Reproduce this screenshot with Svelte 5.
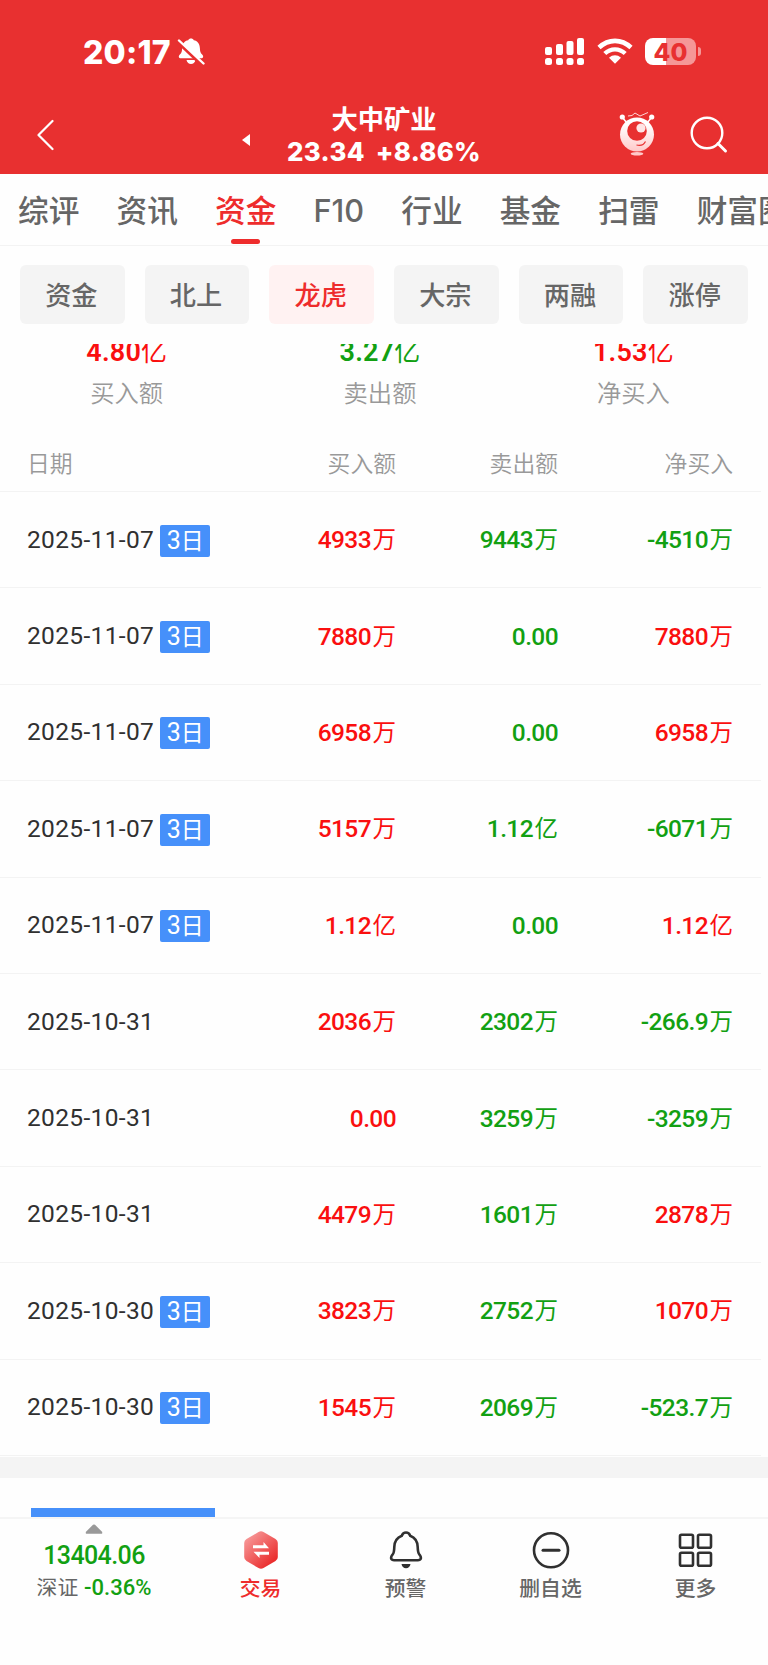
<script>
  const tabs = ['综评', '资讯', '资金', 'F10', '行业', '基金', '扫雷', '财富圈'];
  const filters = ['资金', '北上', '龙虎', '大宗', '两融', '涨停'];
  const activeTab = '资金';
  const activeFilter = '龙虎';

  const summary = [
    { value: '4.80亿', label: '买入额', color: 'up' },
    { value: '3.27亿', label: '卖出额', color: 'down' },
    { value: '1.53亿', label: '净买入', color: 'up' }
  ];

  const rows = [
    { date: '2025-11-07', days: 3, buy: '4933万', sell: '9443万', net: '-4510万' },
    { date: '2025-11-07', days: 3, buy: '7880万', sell: '0.00', net: '7880万' },
    { date: '2025-11-07', days: 3, buy: '6958万', sell: '0.00', net: '6958万' },
    { date: '2025-11-07', days: 3, buy: '5157万', sell: '1.12亿', net: '-6071万' },
    { date: '2025-11-07', days: 3, buy: '1.12亿', sell: '0.00', net: '1.12亿' },
    { date: '2025-10-31', buy: '2036万', sell: '2302万', net: '-266.9万' },
    { date: '2025-10-31', buy: '0.00', sell: '3259万', net: '-3259万' },
    { date: '2025-10-31', buy: '4479万', sell: '1601万', net: '2878万' },
    { date: '2025-10-30', days: 3, buy: '3823万', sell: '2752万', net: '1070万' },
    { date: '2025-10-30', days: 3, buy: '1545万', sell: '2069万', net: '-523.7万' }
  ];

  const number = (value) => value.replace(/[万亿]/, '');
  const unit = (value) => value.replace(/[^万亿]/g, '');
</script>

{#snippet amount(value, color)}
  <span class="amount {color}"><span class="num">{number(value)}</span>{#if unit(value)}<span class="unit">{unit(value)}</span>{/if}</span>
{/snippet}

<div class="page">
  <header>
    <div class="status-bar">
      <span class="time">20:17</span>
      <svg class="mute" width="28" height="28" viewBox="0 0 28 28">
        <path d="M4.2 20.3c-2.9 0-2.9-2.4-1.3-3.8 1.9-1.7 2.1-3.2 2.2-6.2C5.3 5.5 7.7 3 11.2 2.3c.7-2.3 4.9-2.3 5.6 0 3.5.7 5.9 3.2 6.1 8 .1 3 .4 4.5 2.2 6.2 1.6 1.4 1.6 3.8-1.3 3.8z" fill="#fff" />
        <path d="M9.5 22h9c-.6 2.5-2.3 4-4.5 4s-3.9-1.5-4.5-4z" fill="#fff" />
        <path d="M1.5 4.5l23 22" stroke="#e83030" stroke-width="3.5" />
        <path d="M2 2.5l24.5 23" stroke="#fff" stroke-width="2.4" stroke-linecap="round" />
      </svg>
      <span class="spacer"></span>
      <svg width="40" height="28" viewBox="0 0 40 28" fill="#fff">
        <rect x="0" y="9" width="7" height="8" rx="2" />
        <rect x="11" y="6" width="7" height="11" rx="2" />
        <rect x="21.5" y="3" width="7" height="14" rx="2" />
        <rect x="32" y="0" width="7" height="17" rx="2" />
        <rect x="0" y="20" width="7" height="7" rx="2.5" />
        <rect x="11" y="20" width="7" height="7" rx="2.5" />
        <rect x="21.5" y="20" width="7" height="7" rx="2.5" />
        <rect x="32" y="20" width="7" height="7" rx="2.5" />
      </svg>
      <svg class="wifi" width="36" height="26" viewBox="0 0 36 26" fill="none" stroke="#fff">
        <path d="M2 9.5C11.5.6 24.5.6 34 9.5" stroke-width="4.6" />
        <path d="M7.8 15.5c6-5.5 14.4-5.5 20.4 0" stroke-width="4.4" />
        <path d="M12 19.8c3.5-3.3 8.5-3.3 12 0L18 25.8z" fill="#fff" stroke="none" />
      </svg>
      <div class="battery"><span>40</span></div>
      <i class="battery-tip"></i>
    </div>

    <div class="nav">
      <svg class="back" width="18" height="32" viewBox="0 0 18 32">
        <path d="M15.5 2L1.5 16l14 14" fill="none" stroke="#fff" stroke-width="2.2" stroke-linecap="round" stroke-linejoin="round" />
      </svg>
      <svg class="prev" width="8" height="12" viewBox="0 0 8 12"><path d="M8 0v12L0 6z" fill="#fff" /></svg>
      <div class="title">
        <div class="name">大中矿业</div>
        <div class="quote"><span>23.34</span><span>+8.86%</span></div>
      </div>
      <svg class="robot" width="36" height="46" viewBox="0 0 36 46">
        <defs>
          <linearGradient id="robot" x1="0" y1="0" x2="0" y2="1">
            <stop offset="0.2" stop-color="#fff" />
            <stop offset="1" stop-color="#ffc9c9" />
          </linearGradient>
        </defs>
        <path d="M9 5l4-.5 3-2.5 5 3 8-3.5" fill="none" stroke="#ffd5d5" stroke-width="1" />
        <path d="M3.5 6.5l4 5M32.5 6.5l-4 5" stroke="#fff" stroke-width="1.5" />
        <circle cx="3.3" cy="6" r="2.6" fill="#fff" />
        <circle cx="32.7" cy="6" r="2.6" fill="#fff" />
        <circle cx="18" cy="23.5" r="17" fill="url(#robot)" />
        <circle cx="18" cy="20" r="9.8" fill="#e83030" />
        <circle cx="22" cy="17" r="4.6" fill="#ffe5e5" />
        <path d="M17.5 34c4 1 7.5-.5 9-3.5" fill="none" stroke="#e83030" stroke-width="1.2" />
        <ellipse cx="18" cy="42.8" rx="6.3" ry="1.7" fill="#ffc9c9" />
      </svg>
      <svg class="search" width="38" height="38" viewBox="0 0 38 38" fill="none" stroke="#fff" stroke-width="2.4">
        <circle cx="17" cy="17" r="15.3" />
        <path d="M28 27.5l7.5 7.5" stroke-width="3" stroke-linecap="round" />
      </svg>
    </div>
  </header>

  <nav class="tabs">
    {#each tabs as tab}
      <span class="tab" class:active={tab === activeTab}>{tab}</span>
    {/each}
  </nav>

  <div class="filters">
    {#each filters as filter}
      <span class="filter" class:active={filter === activeFilter}>{filter}</span>
    {/each}
  </div>

  <main>
    <div class="summary">
      {#each summary as item}
        <div class="summary-item">
          {@render amount(item.value, item.color)}
          <span class="label">{item.label}</span>
        </div>
      {/each}
    </div>

    <div class="table">
      <div class="row head">
        <span>日期</span>
        <span>买入额</span>
        <span>卖出额</span>
        <span>净买入</span>
      </div>
      {#each rows as row}
        <div class="row">
          <div class="date">
            <span class="num">{row.date}</span>
            {#if row.days}<span class="badge"><span class="num">{row.days}</span>日</span>{/if}
          </div>
          {@render amount(row.buy, 'up')}
          {@render amount(row.sell, 'down')}
          {@render amount(row.net, row.net.startsWith('-') ? 'down' : 'up')}
        </div>
      {/each}
    </div>

    <div class="divider"></div>
    <div class="next-section"><div class="blue-bar"></div></div>
  </main>

  <footer>
    <div class="index">
      <svg width="18" height="10" viewBox="0 0 18 10"><path d="M8 .8q1-.8 2 0l7 7q1 2-1 2H2q-2 0-1-2z" fill="#999" /></svg>
      <span class="index-value num">13404.06</span>
      <span class="index-change">深证 <span class="num">-0.36%</span></span>
    </div>
    <div class="action trade">
      <svg width="40" height="40" viewBox="0 0 40 40">
        <defs>
          <linearGradient id="hex" x1="0.1" y1="0.1" x2="0.8" y2="0.9">
            <stop offset="0" stop-color="#f79a9a" />
            <stop offset="1" stop-color="#ea2a2a" />
          </linearGradient>
        </defs>
        <path d="M17.5 2q2.500-1.400 5 0l12 7q2.300 1.400 2.300 4v14q0 2.600-2.300 4l-12 7q-2.500 1.400-5 0l-12-7q-2.300-1.400-2.300-4V13q0-2.600 2.300-4z" fill="url(#hex)" />
        <path d="M12 15.300h10.500v-3.300l5.500 6.200H12zM28 24.700H18.500v3.300l-6-6.200H28z" fill="#fff" />
      </svg>
      <span>交易</span>
    </div>
    <div class="action">
      <svg width="40" height="40" viewBox="0 0 40 40" fill="none" stroke="#303030" stroke-width="2.6">
        <path d="M20 2.500c-2 0-3.500 1.200-4.200 3.200C11 7.500 8.500 11.500 8.300 17c-.1 3.500-.2 5.700-1.500 7.300-1.600 2-2 3.200-1.600 4.400.4 1.200 1.500 1.600 3 1.600h23.600c1.500 0 2.600-.4 3-1.600.4-1.200 0-2.400-1.600-4.400-1.300-1.600-1.400-3.800-1.500-7.300-.2-5.500-2.700-9.500-7.500-11.300C23.500 3.700 22 2.500 20 2.500z" />
        <path d="M15.500 34h9c-.4 2.600-2 4.200-4.500 4.200s-4.100-1.600-4.500-4.200z" fill="#303030" stroke="none" />
      </svg>
      <span>预警</span>
    </div>
    <div class="action">
      <svg width="40" height="40" viewBox="0 0 40 40" fill="none" stroke="#303030" stroke-width="2.6">
        <circle cx="20" cy="20.3" r="17" />
        <path d="M12 20.300h16" stroke-width="3" stroke-linecap="round" />
      </svg>
      <span>删自选</span>
    </div>
    <div class="action">
      <svg width="40" height="40" viewBox="0 0 40 40" fill="none" stroke="#303030" stroke-width="2.6">
        <rect x="4" y="4.7" width="13" height="13" rx="1.5" />
        <rect x="22" y="4.7" width="13" height="13" rx="1.5" />
        <rect x="4" y="22.7" width="13" height="13" rx="1.5" />
        <rect x="22" y="22.7" width="13" height="13" rx="1.5" />
      </svg>
      <span>更多</span>
    </div>
  </footer>
</div>

<style>
  :global(body) {
    margin: 0;
    background: #fff;
  }

  .page {
    width: 768px;
    height: 1665px;
    overflow: hidden;
    display: flex;
    flex-direction: column;
    background: #fefefe;
    font-family: Inter, 'Noto Sans CJK SC', sans-serif;
    color: #303030;
  }

  svg {
    display: block;
    flex-shrink: 0;
  }

  .num {
    font-family: Roboto, 'Noto Sans CJK SC', sans-serif;
  }

  header {
    height: 174px;
    flex-shrink: 0;
    background: #e83030;
    color: #fff;
  }

  .status-bar {
    height: 66px;
    padding: 38px 67px 0 83px;
    box-sizing: border-box;
    display: flex;
    align-items: flex-start;
  }

  .time {
    width: 88px;
    font-size: 32px;
    line-height: 30px;
    font-weight: 800;
    letter-spacing: 0.2px;
    white-space: nowrap;
  }

  .mute {
    margin-left: 6px;
  }

  .spacer {
    flex: 1;
  }

  .wifi {
    margin: 0 12px;
  }

  .battery {
    width: 51px;
    height: 27px;
    border-radius: 8px;
    background: linear-gradient(90deg, #fff 41%, #f59797 41%);
    color: #e83030;
    font-size: 24.5px;
    line-height: 28px;
    font-weight: 800;
    text-align: center;
  }

  .battery-tip {
    width: 3px;
    height: 9px;
    margin: 9px 0 0 2px;
    border-radius: 0 4px 4px 0;
    background: #f59797;
  }

  .nav {
    height: 109px;
    display: flex;
    align-items: center;
  }

  .back {
    margin: 28px 0 0 37px;
  }

  .prev {
    margin: 39px 0 0 187px;
  }

  .title {
    width: 268px;
    margin-top: 31px;
    text-align: center;
    font-weight: 700;
  }

  .name {
    font-size: 26.3px;
    line-height: 32px;
  }

  .quote {
    display: flex;
    justify-content: center;
    gap: 11px;
    font-size: 25.8px;
    font-weight: 800;
    letter-spacing: 0.3px;
    line-height: 32px;
  }

  .robot {
    margin: 27px 0 0 101px;
  }

  .search {
    margin: 28px 0 0 35px;
  }

  .tabs {
    height: 72px;
    flex-shrink: 0;
    box-sizing: border-box;
    border-bottom: 1px solid #f3f3f3;
    padding-left: 18px;
    display: flex;
    gap: 37.1px;
    overflow: hidden;
  }

  .tab {
    flex-shrink: 0;
    display: flex;
    flex-direction: column;
    align-items: center;
    font-size: 30.7px;
    line-height: 65px;
    font-weight: 500;
    color: #666;
    padding-top: 4px;
    height: 67px;
  }

  .tab.active {
    color: #ee2c2c;
  }

  .tab.active::after {
    content: '';
    width: 29px;
    height: 5px;
    margin-top: -4px;
    border-radius: 3px;
    background: #ee2c2c;
    flex-shrink: 0;
  }

  .filters {
    display: flex;
    gap: 20px;
    padding: 19px 20px 20px;
    flex-shrink: 0;
  }

  .filter {
    flex: 1;
    height: 59px;
    box-sizing: border-box;
    padding-right: 2px;
    border-radius: 6px;
    background: #f4f4f4;
    color: #666;
    font-size: 26.2px;
    line-height: 61px;
    font-weight: 500;
    text-align: center;
  }

  .filter.active {
    background: #fff2f2;
    color: #ee2c2c;
  }

  main {
    flex: 1;
    min-height: 0;
    overflow: hidden;
  }

  .up {
    color: #fa0f0f;
  }

  .down {
    color: #12a012;
  }

  .amount {
    white-space: nowrap;
    padding-top: 3px;
  }

  .amount .num {
    font-size: 24.5px;
    font-weight: 500;
    letter-spacing: -0.6px;
  }

  .unit {
    font-size: 23.5px;
    margin-left: 1.5px;
  }

  /* scrolled partly under the filter bar */
  .summary {
    width: 760px;
    height: 91px;
    margin-top: -11px;
    display: flex;
  }

  .summary-item {
    flex: 1;
    display: flex;
    flex-direction: column;
    align-items: center;
    line-height: 32px;
  }

  .summary-item .num {
    font-size: 27px;
    font-weight: 600;
    letter-spacing: 0.2px;
  }

  .summary-item .unit {
    font-size: 26px;
    margin-left: 0;
  }

  .label {
    margin-top: 6px;
    color: #999;
    font-size: 24.3px;
    font-weight: 350;
  }

  .table {
    width: 761px;
  }

  .row {
    height: 96.4px;
    box-sizing: border-box;
    border-bottom: 1px solid #f3f3f3;
    padding: 0 28px 0 27px;
    display: grid;
    grid-template-columns: 202px 167px 162px 175px;
    align-items: center;
    text-align: right;
    line-height: 32px;
  }

  .row.head {
    height: 68px;
    padding-bottom: 8px;
    padding-top: 20px;
    color: #999;
    font-size: 22.8px;
    font-weight: 350;
  }

  .row.head span:first-child {
    text-align: left;
  }

  .date {
    display: flex;
    align-items: center;
    gap: 6px;
    white-space: nowrap;
  }

  .date > .num {
    font-size: 24.5px;
    letter-spacing: 0.35px;
  }

  .badge {
    width: 50px;
    height: 32px;
    margin-top: 2px;
    border-radius: 2px;
    background: #4690fa;
    color: #fff;
    font-size: 23px;
    text-align: center;
    flex-shrink: 0;
  }

  .badge .num {
    font-size: 25px;
  }

  .divider {
    height: 21px;
    margin-top: 1px;
    background: #f4f4f4;
  }

  .next-section {
    padding: 30px 31px 0;
  }

  .blue-bar {
    width: 184px;
    height: 40px;
    background: #4690fa;
  }

  footer {
    height: 148px;
    flex-shrink: 0;
    box-sizing: border-box;
    border-top: 2px solid #f5f5f5;
    background: #fefefe;
    display: grid;
    grid-template-columns: 188px repeat(4, 145px);
  }

  .index,
  .action {
    display: flex;
    flex-direction: column;
    align-items: center;
    white-space: nowrap;
  }

  .index {
    padding-top: 5px;
  }

  .index-value {
    margin-top: 6px;
    font-size: 25px;
    line-height: 32px;
    font-weight: 500;
    letter-spacing: -0.6px;
    color: #12a012;
  }

  .index-change {
    font-size: 20.8px;
    line-height: 32px;
    color: #666;
  }

  .index-change .num {
    font-size: 22px;
    font-weight: 500;
    color: #12a012;
  }

  .action {
    padding-top: 11px;
    font-size: 20.8px;
    line-height: 32px;
    font-weight: 500;
    color: #666;
  }

  .action span {
    margin-top: 3px;
  }

  .trade {
    color: #ee2c2c;
  }
</style>
